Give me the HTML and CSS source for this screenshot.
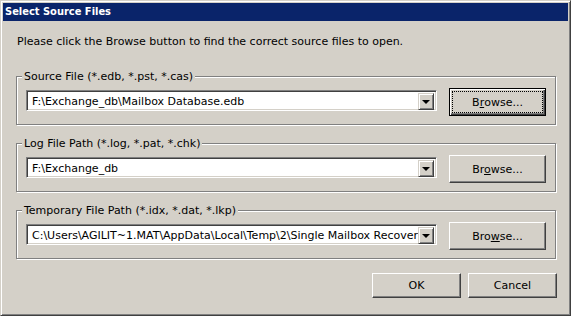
FILE: index.html
```html
<!DOCTYPE html>
<html lang="en">
<head>
  <meta charset="UTF-8">
  <meta name="viewport" content="width=device-width, initial-scale=1.0">
  <title>Select Source Files</title>
  <link rel="stylesheet" href="styles.css">
</head>
<body>
  <div class="dialog">
    <div class="titlebar">Select Source Files</div>

    <div class="content">
      <p class="intro">Please click the Browse button to find the correct source files to open.</p>

      <div class="group">
        <span class="legend">Source File (*.edb, *.pst, *.cas)</span>
        <div class="row">
          <div class="combo">
            <span class="combo-text">F:\Exchange_db\Mailbox Database.edb</span>
            <span class="drop"><i class="arrow"></i></span>
          </div>
          <button class="btn browse default"><span class="focus">B<u>r</u>owse...</span></button>
        </div>
      </div>

      <div class="group">
        <span class="legend">Log File Path (*.log, *.pat, *.chk)</span>
        <div class="row">
          <div class="combo">
            <span class="combo-text">F:\Exchange_db</span>
            <span class="drop"><i class="arrow"></i></span>
          </div>
          <button class="btn browse"><span>Br<u>o</u>wse...</span></button>
        </div>
      </div>

      <div class="group">
        <span class="legend">Temporary File Path (*.idx, *.dat, *.lkp)</span>
        <div class="row">
          <div class="combo">
            <span class="combo-text">C:\Users\AGILIT~1.MAT\AppData\Local\Temp\2\Single Mailbox Recovery</span>
            <span class="drop"><i class="arrow"></i></span>
          </div>
          <button class="btn browse"><span>Bro<u>w</u>se...</span></button>
        </div>
      </div>

      <div class="footer">
        <button class="btn action">OK</button>
        <button class="btn action">Cancel</button>
      </div>
    </div>
  </div>
</body>
</html>
```

FILE: styles.css
```css
body {
  margin: 0;
  font-family: "DejaVu Sans", Verdana, sans-serif;
  font-size: 11px;
  color: #000;
  background-color: #d4d0c8;
}
.dialog {
  box-sizing: border-box;
  width: 571px;
  height: 316px;
  padding: 2px;
  background-color: #d4d0c8;
  border: 1px solid;
  border-color: #d4d0c8 #404040 #404040 #d4d0c8;
  box-shadow: inset 1px 1px #fff, inset -1px -1px #808080;
}
.titlebar {
  height: 18px;
  line-height: 18px;
  padding-left: 2px;
  background-color: #0a246a;
  color: #fff;
  font-family: "DejaVu Sans Condensed", "DejaVu Sans", sans-serif;
  font-weight: bold;
}
.content {
  padding: 0 12px 0 13px;
}
.intro {
  margin: 14px 0 0 1px;
  line-height: 13px;
}
.group {
  position: relative;
  margin-top: 28px;
  padding: 11px 9px 8px 9px;
  border: 1px solid #808080;
  box-shadow: inset 1px 1px #fff, 1px 1px #fff;
}
.group + .group {
  margin-top: 18px;
}
.legend {
  position: absolute;
  top: -7px;
  left: 5px;
  padding: 0 2px;
  line-height: 13px;
  background-color: #d4d0c8;
}
.row {
  display: flex;
  align-items: flex-start;
  gap: 12px;
}
.combo {
  box-sizing: border-box;
  flex: 1;
  display: flex;
  height: 21px;
  margin-top: 2px;
  padding: 2px;
  background-color: #fff;
  border: 1px solid;
  border-color: #808080 #fff #fff #808080;
  box-shadow: inset 1px 1px #404040, inset -1px -1px #d4d0c8;
  min-width: 0;
}
.combo-text {
  flex: 1;
  min-width: 0;
  padding-left: 3px;
  line-height: 17px;
  white-space: nowrap;
  overflow: hidden;
}
.drop {
  box-sizing: border-box;
  display: flex;
  align-items: center;
  justify-content: center;
  width: 16px;
  height: 17px;
  background-color: #d4d0c8;
  border: 1px solid;
  border-color: #d4d0c8 #404040 #404040 #d4d0c8;
  box-shadow: inset 1px 1px #fff, inset -1px -1px #808080;
}
.arrow {
  width: 0;
  height: 0;
  border-left: 4px solid transparent;
  border-right: 4px solid transparent;
  border-top: 4px solid #000;
  margin-top: 1px;
}
.btn {
  box-sizing: border-box;
  font-family: inherit;
  font-size: 11px;
  color: #000;
  padding: 0;
  background-color: #d4d0c8;
  border: 1px solid;
  border-color: #fff #404040 #404040 #fff;
  box-shadow: inset -1px -1px #808080;
  display: flex;
  align-items: center;
  justify-content: center;
}
.browse {
  width: 97px;
  height: 28px;
}
.default {
  border: 1px solid #000;
  box-shadow: inset 1px 1px #fff, inset -1px -1px #404040, inset -2px -2px #808080;
}
.focus {
  box-sizing: border-box;
  display: flex;
  align-items: center;
  justify-content: center;
  width: 89px;
  height: 20px;
  outline: 1px dotted #000;
}
.footer {
  display: flex;
  justify-content: flex-end;
  gap: 7px;
  margin-top: 14px;
  margin-right: -1px;
}
.action {
  width: 89px;
  height: 25px;
}
```
